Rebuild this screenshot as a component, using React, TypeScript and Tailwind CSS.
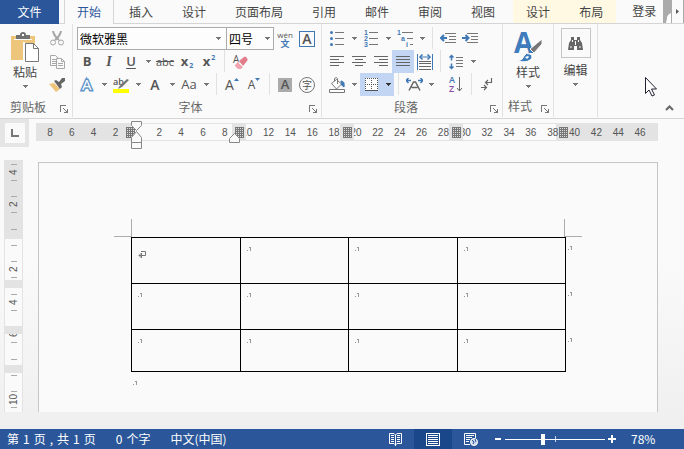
import { useState } from "react";
import type { ReactNode } from "react";
import clsx from "clsx";

const horizontalMarks = [
  "8", "6", "4", "2", "", "2", "4", "6", "8", "10", "12", "14", "16", "18",
  "20", "22", "24", "26", "28", "30", "32", "34", "36", "38", "40", "42", "44", "46",
];
const verticalMarks = ["4", "2", "", "2", "4", "6", "8", "10"];
const tabs = ["插入", "设计", "页面布局", "引用", "邮件", "审阅", "视图"];
const rowHeights = ["h-[46px]", "h-[46px]", "h-[42px]"];

function Caret({ dark }: { dark?: boolean }) {
  return (
    <svg width="5" height="3" viewBox="0 0 5 3" shapeRendering="crispEdges">
      <path d="M0 0h5v1h-1v1h-1v1h-1v-1h-1v-1h-1z" fill={dark ? "#333" : "#777"} />
    </svg>
  );
}

function Tool({ label, children, className }: { label: string; children: ReactNode; className?: string }) {
  return (
    <button
      aria-label={label}
      className={clsx("flex h-[23px] w-[22px] shrink-0 items-center justify-center leading-none text-[#555]", className)}
    >
      {children}
    </button>
  );
}

function Drop({ label, dark, className }: { label: string; dark?: boolean; className?: string }) {
  return (
    <button
      aria-label={label}
      className={clsx("flex h-[23px] w-3 shrink-0 items-center justify-center", className)}
    >
      <Caret dark={dark} />
    </button>
  );
}

function Sep() {
  return <div className="mx-1 h-[22px] w-px shrink-0 bg-[#e1e1e1]" />;
}

function Group({ name, launcher, children, className }: { name: string; launcher?: boolean; children: ReactNode; className?: string }) {
  return (
    <section aria-label={name} className={clsx("flex shrink-0 border-r border-[#e1e1e1] pt-[3px]", className)}>
      <div className="flex flex-1 flex-col">
        <div className="h-[69px]">{children}</div>
        <div className="relative flex h-[22px] items-center justify-center pr-4 text-[#666]">
          <span>{name}</span>
          {launcher && (
            <button aria-label={name + "设置"} className="absolute right-1 bottom-1">
              <svg width="8" height="8" viewBox="0 0 8 8" shapeRendering="crispEdges" fill="none" stroke="#777">
                <path d="M0 6.500V.500H6M3 3l4 4M7.500 3.500v4h-4" />
              </svg>
            </button>
          )}
        </div>
      </div>
    </section>
  );
}

function Lines({ rows }: { rows: [number, number][] }) {
  return (
    <svg width="14" height="11" viewBox="0 0 14 11" shapeRendering="crispEdges" fill="#666">
      {rows.map(([x, w], i) => (
        <rect key={i} x={x} y={i * 3} width={w} height="1" />
      ))}
    </svg>
  );
}

function Paste() {
  return (
    <svg width="28" height="30" viewBox="0 0 28 30">
      <path d="M0 4h24v24H0z" fill="#edc57b" />
      <path d="M5 7V3h4q0-3 3-3t3 3h4v4z" fill="#717171" />
      <path d="M3 7h18v1H3z" fill="#fafafa" />
      <path d="M11 2h2v2h-2z" fill="#fff" />
      <path d="M12 10h2v20h-2z" fill="#fafafa" />
      <path d="M14.500 11.500h8l5 5v13h-13z" fill="#fff" stroke="#777" />
      <path d="M22.500 11.500v5h5" fill="none" stroke="#777" />
    </svg>
  );
}

function Scissors() {
  return (
    <svg width="14" height="15" viewBox="0 0 14 15" fill="none" stroke="#a5a5a5">
      <path d="M3 0q1 5 6 9M11 0q-1 5-6 9" strokeWidth="2" />
      <circle cx="3" cy="11.500" r="2.500" />
      <circle cx="11" cy="11.500" r="2.500" />
    </svg>
  );
}

function Copy() {
  return (
    <svg width="15" height="14" viewBox="0 0 15 14" fill="#fafafa" stroke="#a8a8a8">
      <path d="M.5.500h5l3 3v7h-8zM2 4.500h4M2 6.500h4M2 8.500h4" />
      <path d="M6.500 3.500h5l3 3v7h-8zM11.500 3.500v3h3M8 8.500h5M8 10.500h5" />
    </svg>
  );
}

function Brush() {
  return (
    <svg width="16" height="15" viewBox="0 0 16 15">
      <path d="M0 7l5-1 6 6-4 3z" fill="#edc57b" />
      <path d="M5 4l2-1 3 2 3-4 3 0v3l-4 3 1 3-2 2z" fill="#666" />
    </svg>
  );
}

function Clear() {
  return (
    <svg className="overflow-visible" width="16" height="16" viewBox="0 0 16 16">
      <text x="1" y="9" fontSize="10" fontFamily="Open Sans" fill="#555">A</text>
      <path d="M3 11l3-3 5 5-2 2H6l-3-3z" fill="#f0a3ad" />
      <path d="M7 7l5-4q1-1 2 0l1.500 2q.5 1-.5 2l-4 5z" fill="#e37c8a" />
      <path d="M6 7.500l5 5" stroke="#fff" />
    </svg>
  );
}

function Highlighter() {
  return (
    <svg className="overflow-visible" width="16" height="16" viewBox="0 0 16 16">
      <text x="0" y="8" fontSize="9" fontFamily="Open Sans" fontWeight="600" fill="#555">ab</text>
      <path d="M14 2l2 1-7 7-3 1.500-1 0 2-3z" fill="#777" />
      <path d="M0 12h16v4H0z" fill="#ffff00" />
    </svg>
  );
}

function ListIcon({ numbered }: { numbered?: boolean }) {
  return (
    <svg className="overflow-visible" width="14" height="17" viewBox="0 0 14 17">
      {[2, 8, 14].map((y, i) =>
        numbered ? (
          <text key={y} x="0" y={y + 3} fontSize="7" fontFamily="Liberation Sans" fontWeight="700" fill="#3f78b5">{i + 1}</text>
        ) : (
          <circle key={y} cx="1.500" cy={y + 0.5} r="1.500" fill="#3f78b5" />
        )
      )}
      <path d="M5 2.500h9M5 8.500h9M5 14.500h9" stroke="#777" />
    </svg>
  );
}

function Multilevel() {
  return (
    <svg className="overflow-visible" width="16" height="17" viewBox="0 0 16 17" fill="#3f78b5" fontFamily="Liberation Sans" fontWeight="700">
      <text x="0" y="5" fontSize="7">1</text>
      <text x="4" y="11" fontSize="7">a</text>
      <text x="9" y="17" fontSize="7">i</text>
      <path d="M5 2.500h11M10 8.500h6M13 14.500h3" stroke="#777" />
    </svg>
  );
}

function Indent({ more }: { more?: boolean }) {
  return (
    <svg width="16" height="11" viewBox="0 0 16 11" fill="none">
      <path d="M5 .500h11M9 3.500h7M9 6.500h7M5 9.500h11" stroke="#777" />
      <path d={more ? "M0 5h6M3.500 2l3 3-3 3" : "M1 5h6M4 2L1 5l3 3"} stroke="#3f78b5" strokeWidth="2" />
    </svg>
  );
}

function Distribute() {
  return (
    <svg width="16" height="16" viewBox="0 0 16 16" fill="none">
      <path d="M.5 0v16M15.500 0v16M3 3h10" stroke="#3f78b5" />
      <path d="M5.500 .500L3 3l2.500 2.500M10.500 .500L13 3l-2.500 2.500" stroke="#3f78b5" strokeWidth="1.500" />
      <path d="M2 7.500h12M2 9.500h12M2 12.500h12M2 15.500h12" stroke="#666" />
    </svg>
  );
}

function LineSpacing() {
  return (
    <svg width="14" height="16" viewBox="0 0 14 16" fill="none">
      <path d="M2.500 1v5.500M2.500 9.500V15M.5 3.500l2-2 2 2M.5 12.500l2 2 2-2" stroke="#3f78b5" strokeWidth="1.500" />
      <path d="M7 3.500h7M7 6.500h7M7 9.500h7M7 12.500h7" stroke="#777" />
    </svg>
  );
}

function Bucket() {
  return (
    <svg width="17" height="16" viewBox="0 0 17 16" fill="none" stroke="#777">
      <path d="M2.500 6.500l5-4 5 4.500-5 5z" fill="#fff" />
      <path d="M5.500 4V1.500q2-2 3 0V7" />
      <path d="M12 4q4 0 3 6l-2.500-2z" fill="#3f78b5" stroke="#3f78b5" />
      <path d="M.5 12.500h15v3H.5z" fill="#fff" />
    </svg>
  );
}

function Borders() {
  return (
    <svg width="13" height="13" viewBox="0 0 13 13" shapeRendering="crispEdges">
      <path d="M0 0h13v13H0z" fill="#fff" />
      <path d="M0 .500h13M0 6.500h13M.5 0v13M6.500 0v13M12.500 0v13" stroke="#555" strokeDasharray="1 1" />
      <path d="M0 12.500h13" stroke="#555" />
    </svg>
  );
}

function ScaleText() {
  return (
    <svg width="17" height="13" viewBox="0 0 17 13" fill="none">
      <path d="M3 12.500L7.500 4h2l4.500 8.500M5.500 9.500h6" stroke="#666" strokeWidth="1.500" />
      <path d="M0 2.500h5M2.500 0L0 2.500 2.500 5M17 2.500h-5M14.500 0L17 2.500 14.500 5" stroke="#3f78b5" strokeWidth="1.500" />
    </svg>
  );
}

function Sort() {
  return (
    <svg className="overflow-visible" width="14" height="17" viewBox="0 0 14 17" fontFamily="Open Sans" fontSize="9" fontWeight="600">
      <text x="0" y="7" fill="#3f78b5">A</text>
      <text x="0" y="16" fill="#8b4fb0">Z</text>
      <path d="M10.500 1v14M8 12l2.500 3 2.500-3" fill="none" stroke="#666" />
    </svg>
  );
}

function Marks() {
  return (
    <svg width="12" height="13" viewBox="0 0 12 13" fill="none" stroke="#666">
      <path d="M10.500 0v4.500H5M7 2L4.500 4.500 7 7M0 9.500h5M3 7l2.500 2.500L3 12" strokeWidth="1.200" />
    </svg>
  );
}

function StylesIcon() {
  return (
    <span className="relative h-[30px] w-7 font-['Open_Sans',sans-serif]">
      <span className="absolute -top-1.5 left-0 text-[28px] leading-8 font-bold text-[#3f7cbb]">A</span>
      <svg className="absolute inset-0" width="28" height="30" viewBox="0 0 28 30">
        <path d="M28 7v5l-8 9-4-4z" fill="#777" stroke="#fafafa" />
        <path d="M4 29q5-1 6-5 2-4 6-2 4 3 0 6-4 3-12 1z" fill="#3f7cbb" stroke="#fafafa" />
        <path d="M11 25l3-1 1 1-2 2z" fill="#fff" />
      </svg>
    </span>
  );
}

function Binoculars() {
  return (
    <svg width="15" height="13" viewBox="0 0 15 13" fill="#666">
      <path d="M3 0h3v3h3V0h3v3l2 3 1 7H9V9H6v4H0l1-7 2-3z" />
      <path d="M2 10h2M11 10h2M7.500 4v4M4.500 3v2M10.500 3v2" stroke="#fafafa" />
    </svg>
  );
}

function CellMark() {
  return (
    <svg width="4" height="4" viewBox="0 0 4 4" shapeRendering="crispEdges" fill="#999">
      <path d="M0 3h1v1H0zM2 0h2v4H3V1H2z" />
    </svg>
  );
}

function Hatch({ className }: { className: string }) {
  return (
    <svg className={clsx("absolute top-[3px]", className)} width="9" height="11" viewBox="0 0 9 11" shapeRendering="crispEdges">
      <path d="M0 0h9v11H0z" fill="#ddd" />
      <path d="M0 .500h9M0 2.500h9M0 4.500h9M0 6.500h9M0 8.500h9M0 10.500h9M.5 0v11M2.500 0v11M4.500 0v11M6.500 0v11M8.500 0v11" stroke="#777" />
    </svg>
  );
}

function TabBar() {
  return (
    <nav className="flex h-6 shrink-0 border-b border-[#d5d5d5] leading-[22px] whitespace-nowrap text-[#444]">
      <button className="h-6 w-[59px] bg-[#2b579a] text-white">文件</button>
      <button className="ml-[5px] h-6 w-[50px] border-x border-[#d5d5d5] bg-[#fafafa] text-[#2b579a]">开始</button>
      <div className="ml-[15px] flex gap-[29px]">
        {tabs.map((tab) => (
          <button key={tab}>{tab}</button>
        ))}
      </div>
      <div className="ml-[18px] flex gap-[29px] bg-[#fff9e3] px-[13px]">
        <button>设计</button>
        <button>布局</button>
      </div>
      <button className="ml-4 pb-0.5">登录</button>
      <div className="ml-auto flex">
        <svg width="8" height="23" viewBox="0 0 8 23">
          <path d="M0 0h8v23H0z" fill="#ababab" />
          <path d="M8 13q-4 2-4 5l-1 5h5z" fill="#fff" />
        </svg>
        <button aria-label="更多选项卡" className="flex w-[13px] items-center justify-center border-x border-[#ababab]">
          <svg width="3" height="5" viewBox="0 0 3 5"><path d="M0 0l3 2.500L0 5z" fill="#555" /></svg>
        </button>
      </div>
    </nav>
  );
}

function FontGroup() {
  return (
    <Group name="字体" launcher className="w-[249px] pl-[3px]">
      <div className="flex pl-px">
        <div className="relative">
          <select aria-label="字体名称" className="block h-[23px] w-[150px] appearance-none border border-[#ababab] bg-[#fdfdfd] pl-0.5 text-black">
            <option>微软雅黑</option>
          </select>
          <span className="pointer-events-none absolute inset-y-0 right-1.5 flex items-center"><Caret /></span>
        </div>
        <div className="relative -ml-px">
          <select aria-label="字号" className="block h-[23px] w-12 appearance-none border border-[#ababab] bg-[#fdfdfd] pl-0.5 text-black">
            <option>四号</option>
          </select>
          <span className="pointer-events-none absolute inset-y-0 right-1 flex items-center"><Caret /></span>
        </div>
        <Tool label="拼音指南" className="flex-col">
          <span className="font-['Open_Sans',sans-serif] text-[8px] leading-[9px]">wén</span>
          <span className="text-[9px] leading-[9px] font-bold text-[#3f78b5]">文</span>
        </Tool>
        <Tool label="字符边框">
          <span className="flex size-4 items-center justify-center border border-[#3f78b5] font-['Open_Sans',sans-serif] text-sm leading-none font-semibold">A</span>
        </Tool>
      </div>
      <div className="flex font-['Open_Sans',sans-serif]">
        <Tool label="加粗" className="text-[13px] font-bold">B</Tool>
        <Tool label="倾斜" className="font-['Liberation_Serif',serif] text-sm font-bold italic">I</Tool>
        <Tool label="下划线" className="text-[13px] font-semibold underline underline-offset-2">U</Tool>
        <Drop label="下划线样式" />
        <Tool label="删除线" className="text-[11px] line-through">abc</Tool>
        <Tool label="下标" className="text-[13px] font-bold">x<span className="mt-2 ml-px text-[7px] text-[#3f78b5]">2</span></Tool>
        <Tool label="上标" className="text-[13px] font-bold">x<span className="mb-2 ml-px text-[7px] text-[#3f78b5]">2</span></Tool>
        <Sep />
        <Tool label="清除格式"><Clear /></Tool>
      </div>
      <div className="flex font-['Open_Sans',sans-serif]">
        <Tool label="文本效果">
          <svg className="overflow-visible" width="12" height="14" viewBox="0 0 12 14">
            <text x="1" y="12" fontSize="15" fontFamily="Open Sans" fill="#fff" stroke="#5d94cc" strokeWidth="3" paintOrder="stroke">A</text>
          </svg>
        </Tool>
        <Drop label="文本效果选项" />
        <Tool label="突出显示"><Highlighter /></Tool>
        <Drop label="突出显示颜色" />
        <Tool label="字体颜色" className="text-sm font-semibold">A</Tool>
        <Drop label="字体颜色选项" />
        <Tool label="更改大小写" className="text-[13px]">Aa</Tool>
        <Drop label="大小写选项" />
        <Sep />
        <Tool label="增大字号" className="text-sm">
          A<svg className="mb-2.5" width="5" height="3" viewBox="0 0 5 3"><path d="M0 3L2.500 0 5 3z" fill="#3f78b5" /></svg>
        </Tool>
        <Tool label="减小字号" className="text-xs">
          A<svg className="mb-2.5" width="5" height="3" viewBox="0 0 5 3"><path d="M0 0l2.500 3L5 0z" fill="#3f78b5" /></svg>
        </Tool>
        <Sep />
        <Tool label="字符底纹">
          <span className="flex size-3.5 items-center justify-center bg-[#ababab] text-[13px] leading-none font-semibold">A</span>
        </Tool>
        <Tool label="带圈字符">
          <span className="flex size-4 items-center justify-center rounded-full border border-[#777] font-['Noto_Sans_CJK_SC',sans-serif] text-[10px] leading-none">字</span>
        </Tool>
      </div>
    </Group>
  );
}

function ParagraphGroup() {
  return (
    <Group name="段落" launcher className="w-[181px] pl-1">
      <div className="flex">
        <Tool label="项目符号"><ListIcon /></Tool>
        <Drop label="项目符号库" />
        <Tool label="编号"><ListIcon numbered /></Tool>
        <Drop label="编号库" />
        <Tool label="多级列表"><Multilevel /></Tool>
        <Drop label="列表库" />
        <Sep />
        <Tool label="减少缩进量"><Indent /></Tool>
        <Tool label="增加缩进量"><Indent more /></Tool>
      </div>
      <div className="flex">
        <Tool label="左对齐"><Lines rows={[[0, 14], [0, 9], [0, 14], [0, 9]]} /></Tool>
        <Tool label="居中"><Lines rows={[[0, 14], [3, 8], [0, 14], [3, 8]]} /></Tool>
        <Tool label="右对齐"><Lines rows={[[0, 14], [5, 9], [0, 14], [5, 9]]} /></Tool>
        <Tool label="两端对齐" className="bg-[#c2d5f2]"><Lines rows={[[0, 14], [0, 14], [0, 14], [0, 14]]} /></Tool>
        <Tool label="分散对齐"><Distribute /></Tool>
        <Sep />
        <Tool label="行距"><LineSpacing /></Tool>
        <Drop label="行距选项" />
      </div>
      <div className="flex">
        <Tool label="底纹"><Bucket /></Tool>
        <Drop label="底纹颜色" />
        <Tool label="边框" className="bg-[#c2d5f2]"><Borders /></Tool>
        <Drop label="边框选项" dark className="bg-[#c2d5f2]" />
        <Sep />
        <Tool label="中文版式"><ScaleText /></Tool>
        <Drop label="版式选项" />
        <Tool label="排序" className="ml-2"><Sort /></Tool>
        <Sep />
        <Tool label="显示编辑标记"><Marks /></Tool>
      </div>
    </Group>
  );
}

function Ribbon() {
  return (
    <div className="flex h-[95px] shrink-0 border-b border-[#d5d5d5] pb-px">
      <Group name="剪贴板" launcher className="w-[73px]">
        <div className="flex">
          <button className="ml-[9px] flex w-8 flex-col items-center pt-[5px] text-[#444]">
            <Paste />
            <span className="mt-px mb-1 leading-[18px]">粘贴</span>
            <Caret />
          </button>
          <div className="ml-[5px]">
            <Tool label="剪切"><Scissors /></Tool>
            <Tool label="复制"><Copy /></Tool>
            <Tool label="格式刷"><Brush /></Tool>
          </div>
        </div>
      </Group>
      <FontGroup />
      <ParagraphGroup />
      <Group name="样式" launcher className="w-[51px]">
        <button className="flex w-full flex-col items-center pt-[5px] text-[#444]">
          <StylesIcon />
          <span className="mt-px mb-1 leading-[18px]">样式</span>
          <Caret />
        </button>
      </Group>
      <div className="flex w-11 shrink-0 flex-col items-center border-r border-[#e1e1e1] pt-1 text-[#444]">
        <button className="flex flex-col items-center">
          <span className="flex size-[30px] items-center justify-center border border-[#c6c6c6]"><Binoculars /></span>
          <span className="mt-[3px] mb-1 leading-[18px]">编辑</span>
          <Caret />
        </button>
      </div>
      <button aria-label="折叠功能区" className="mt-auto mr-2.5 mb-1.5 ml-auto">
        <svg width="9" height="6" viewBox="0 0 9 6"><path d="M1 5l3.500-3.500L8 5" fill="none" stroke="#666" strokeWidth="2" /></svg>
      </button>
    </div>
  );
}

function HorizontalRuler() {
  return (
    <div className="relative mt-1 mr-[26px] ml-[7px] flex h-[18px] flex-1 border border-[#e3e3e3] pr-1.5 pl-0.5 text-[10px] leading-[18px] text-[#555]">
      <div className="absolute inset-y-0 left-0 w-[94px] bg-[#e3e3e3]" />
      <div className="absolute inset-y-0 right-0 w-[101px] bg-[#e3e3e3]" />
      {horizontalMarks.map((mark, i) => (
        <span key={i} className="relative flex flex-1 justify-center">{mark}</span>
      ))}
      <div className="absolute inset-y-0 left-[195px] w-3.5 bg-[#e3e3e3]" />
      <div className="absolute inset-y-0 left-[303px] w-3.5 bg-[#e3e3e3]" />
      <div className="absolute inset-y-0 left-[412px] w-3.5 bg-[#e3e3e3]" />
      <Hatch className="left-[89px]" />
      <Hatch className="left-[198px]" />
      <Hatch className="left-[306px]" />
      <Hatch className="left-[415px]" />
      <Hatch className="right-[89px]" />
      <svg className="absolute -top-[3px] left-[94px]" width="11" height="28" viewBox="0 0 11 28" fill="#fafafa" stroke="#888">
        <path d="M.5.500h10v4l-5 5-5-5zM.5 21.500v-5l5-6 5 6v5zM.5 21.500h10v6H.5z" />
      </svg>
      <svg className="absolute top-[9px] left-[192px]" width="11" height="10" viewBox="0 0 11 10" fill="#fafafa" stroke="#888">
        <path d="M.5 9.500v-4l5-5 5 5v4z" />
      </svg>
    </div>
  );
}

function VerticalRuler() {
  return (
    <div className="relative ml-1 w-[19px] shrink-0 overflow-hidden border-x border-[#e3e3e3] bg-[#fafafa] text-[10px] text-[#555]">
      <div className="absolute inset-x-0 top-0 h-[79px] bg-[#e3e3e3]" />
      <div className="absolute inset-x-0 -top-1 -bottom-1 flex flex-col">
        {verticalMarks.map((mark, i) => (
          <div key={i} className="flex flex-1 flex-col items-center justify-center">
            <span className="h-px w-1.5 bg-[#aaa]" />
            <span className="flex h-[15px] rotate-180 items-center justify-center leading-none [writing-mode:vertical-rl]">{mark}</span>
            <span className="h-px w-1.5 bg-[#aaa]" />
          </div>
        ))}
      </div>
      <div className="absolute inset-x-0 top-[120px] h-2 bg-[#e3e3e3]" />
      <div className="absolute inset-x-0 top-[166px] h-2 bg-[#e3e3e3]" />
      <div className="absolute inset-x-0 top-[205px] h-2 bg-[#e3e3e3]" />
    </div>
  );
}

function Page() {
  return (
    <main className="mt-0.5 mr-[26px] ml-[15px] flex-1 border border-b-0 border-[#c6c6c6] bg-[#fafafa] pt-14 pr-[91px] pl-[92px]">
      <div className="flex h-[18px] justify-between">
        <div className="-ml-[17px] w-[18px] border-r border-b border-[#ababab]" />
        <div className="-mr-4 w-[18px] border-b border-l border-[#ababab]" />
      </div>
      <table className="w-full table-fixed border-collapse">
        <tbody>
          {rowHeights.map((height, row) => (
            <tr key={row} className={height}>
              {[0, 1, 2, 3].map((col) => (
                <td key={col} className="relative border border-black p-0 align-top">
                  <div className="pt-[9px] pl-1.5">
                    {row === 0 && col === 0 ? (
                      <svg className="mt-1" width="9" height="9" viewBox="0 0 9 9" fill="none" stroke="#777">
                        <path d="M3 .500h4.500v4H1M3.500 2v5L1 4.500z" />
                      </svg>
                    ) : (
                      <CellMark />
                    )}
                  </div>
                  {col === 3 && (
                    <span className="absolute top-2 left-full ml-[3px]"><CellMark /></span>
                  )}
                </td>
              ))}
            </tr>
          ))}
        </tbody>
      </table>
      <div className="pt-[9px] pl-0.5"><CellMark /></div>
    </main>
  );
}

function StatusBar() {
  const [zoom, setZoom] = useState(78);

  return (
    <footer className="flex h-5 shrink-0 items-center bg-[#2b579a] pl-[7px] whitespace-nowrap text-white">
      <p className="flex gap-1">
        <span>第</span>
        <span>1</span>
        <span>页</span>
        <span>,</span>
        <span>共</span>
        <span>1</span>
        <span>页</span>
      </p>
      <p className="ml-5 flex gap-1">
        <span>0</span>
        <span>个字</span>
      </p>
      <span className="ml-5">中文(中国)</span>
      <div className="ml-auto flex h-full items-center">
        <button aria-label="阅读视图" className="flex h-full w-[38px] items-center justify-center">
          <svg width="13" height="13" viewBox="0 0 13 13" fill="none" stroke="#fff">
            <path d="M6.500 13V2L5 .500H.5v10H5l1.500 1.500L8 10.500h4.500V.500H8L6.500 2M2 2.500h3M2 4.500h3M2 6.500h3M2 8.500h3M8 2.500h3M8 4.500h3M8 6.500h3M8 8.500h3" />
          </svg>
        </button>
        <button aria-label="页面视图" className="flex h-full w-[38px] items-center justify-center bg-[#19478a]">
          <svg width="14" height="13" viewBox="0 0 14 13" fill="none" stroke="#fff" shapeRendering="crispEdges">
            <path d="M.5.500h13v12H.5zM2 2.500h10M2 4.500h10M2 6.500h10M2 8.500h10M2 10.500h10" />
          </svg>
        </button>
        <button aria-label="Web 版式视图" className="flex h-full w-[38px] items-center justify-center">
          <svg width="14" height="13" viewBox="0 0 14 13" fill="none" stroke="#fff">
            <path d="M6 11.500H.5V.500h11V5M2 2.500h8M2 4.500h6M2 6.500h4M2 8.500h3" />
            <circle cx="10" cy="9" r="3.500" fill="#c5d5ea" />
            <path d="M8 7l2 2-1 2M11 6l1 3" stroke="#2b579a" />
          </svg>
        </button>
        <button aria-label="缩小" className="ml-1 flex w-2 justify-center">
          <svg width="6" height="2" viewBox="0 0 6 2"><path d="M0 0h6v2H0z" fill="#fff" /></svg>
        </button>
        <div className="relative mx-[3px] flex h-full items-center">
          <div className="absolute top-1/2 left-1/2 -mt-[3px] h-1.5 w-px bg-[#c5d5ea]" />
          <input
            type="range"
            aria-label="缩放"
            min={10}
            max={190}
            value={zoom}
            onChange={(e) => setZoom(Number(e.target.value))}
            className="relative h-[11px] w-[100px] appearance-none bg-[linear-gradient(#fff,#fff)] bg-[length:100%_1px] bg-center bg-no-repeat [&::-webkit-slider-thumb]:h-[11px] [&::-webkit-slider-thumb]:w-1 [&::-webkit-slider-thumb]:appearance-none [&::-webkit-slider-thumb]:bg-white"
          />
        </div>
        <button aria-label="放大" className="flex w-2 justify-center">
          <svg width="8" height="8" viewBox="0 0 8 8"><path d="M3 0h2v3h3v2H5v3H3V5H0V3h3z" fill="#fff" /></svg>
        </button>
        <span className="w-[68px] pl-[15px]">{zoom}%</span>
      </div>
    </footer>
  );
}

export default function App() {
  return (
    <div className="relative flex h-screen flex-col overflow-hidden bg-[#fafafa] font-['Noto_Sans_CJK_SC',sans-serif] text-xs">
      <TabBar />
      <Ribbon />
      <div className="flex min-h-0 flex-1 flex-col bg-linear-to-b from-[#fafafa] from-45% to-[#efefef]">
        <div className="flex h-7 shrink-0 font-['Liberation_Sans',sans-serif]">
          <button aria-label="制表符" className="flex w-[29px] shrink-0 items-center justify-center bg-[#e5e5e5]">
            <span className="flex size-5 items-center justify-center bg-[#fafafa]">
              <span className="size-2 border-b-2 border-l-2 border-[#777]" />
            </span>
          </button>
          <HorizontalRuler />
        </div>
        <div className="flex min-h-0 flex-1 pt-[13px] pb-[17px] font-['Liberation_Sans',sans-serif]">
          <VerticalRuler />
          <Page />
        </div>
      </div>
      <StatusBar />

      {/* mouse pointer */}
      <svg className="pointer-events-none absolute top-[77px] right-[27px]" width="12" height="20" viewBox="0 0 12 20">
        <path d="M.5.500v16l3.500-3.500 3 6 2.500-1-3-6h5z" fill="#fff" stroke="#223" />
      </svg>
    </div>
  );
}
